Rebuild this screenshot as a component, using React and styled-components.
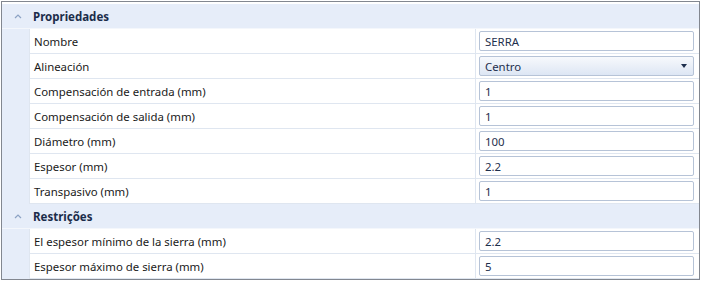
import React from 'react';
import styled, { createGlobalStyle } from 'styled-components';

const Global = createGlobalStyle`
  body {
    margin: 0;
    background: #ffffff;
    font-family: 'Noto Sans', 'Open Sans', sans-serif;
  }
`;

const Grid = styled.div`
  margin: 1px;
  width: 697px;
  height: 275px;
  border: 1px solid #828790;
  padding-top: 2px;
  box-sizing: content-box;
  background: #ffffff;
  overflow: hidden;
`;

const Header = styled.div`
  display: flex;
  align-items: center;
  height: 24px;
  border-bottom: 1px solid #f4f7fc;
  background: #e6edf9;
`;

const Chevron = styled.span`
  width: 27px;
  display: flex;
  justify-content: center;
  padding-left: 4px;
  box-sizing: border-box;
`;

const Title = styled.span`
  font-size: 11.5px;
  font-weight: 700;
  color: #1b2c4a;
  padding-left: 4px;
`;

const Row = styled.div`
  display: grid;
  grid-template-columns: 27px 1fr 224px;
  height: 25px;
`;

const Gutter = styled.div`
  background: #e6edf9;
`;

const Label = styled.div`
  display: flex;
  align-items: center;
  padding-left: 4px;
  border-left: 1px solid #dfe6f0;
  border-bottom: 1px solid #dfe6f0;
  font-size: 11.4px;
  color: #1a1a1a;
`;

const Value = styled.div`
  display: flex;
  align-items: center;
  padding: 0 5px 0 3px;
  border-left: 1px solid #dfe6f0;
  border-bottom: 1px solid #dfe6f0;
`;

const Field = styled.div`
  flex: 1;
  height: 20px;
  box-sizing: border-box;
  border: 1px solid #b6c3d7;
  border-radius: 2px;
  display: flex;
  align-items: center;
  justify-content: space-between;
  padding: 0 6px 0 5px;
  font-size: 11.4px;
  color: #1e2f4d;
  background: ${p => (p.combo ? 'linear-gradient(#f7f9fc, #dde6f4)' : '#ffffff')};
`;

const Arrow = styled.span`
  width: 0;
  height: 0;
  border-left: 3.5px solid transparent;
  border-right: 3.5px solid transparent;
  border-top: 4px solid #1e2f4d;
`;

const sections = [
  {
    title: 'Propriedades',
    rows: [
      ['Nombre', 'SERRA'],
      ['Alineación', 'Centro', true],
      ['Compensación de entrada (mm)', '1'],
      ['Compensación de salida (mm)', '1'],
      ['Diámetro (mm)', '100'],
      ['Espesor (mm)', '2.2'],
      ['Transpasivo (mm)', '1'],
    ],
  },
  {
    title: 'Restrições',
    rows: [
      ['El espesor mínimo de la sierra (mm)', '2.2'],
      ['Espesor máximo de sierra (mm)', '5'],
    ],
  },
];

const ChevronIcon = () => (
  <svg width="8" height="5" viewBox="0 0 8 5">
    <path d="M1 4 L4 1 L7 4" fill="none" stroke="#8ca2c4" strokeWidth="1.2" />
  </svg>
);

export default function App() {
  return (
    <>
      <Global />
      <Grid>
        {sections.map(section => (
          <div key={section.title}>
            <Header>
              <Chevron><ChevronIcon /></Chevron>
              <Title>{section.title}</Title>
            </Header>
            {section.rows.map(([label, value, combo]) => (
              <Row key={label}>
                <Gutter />
                <Label>{label}</Label>
                <Value>
                  <Field combo={combo}>
                    {value}
                    {combo && <Arrow />}
                  </Field>
                </Value>
              </Row>
            ))}
          </div>
        ))}
      </Grid>
    </>
  );
}
